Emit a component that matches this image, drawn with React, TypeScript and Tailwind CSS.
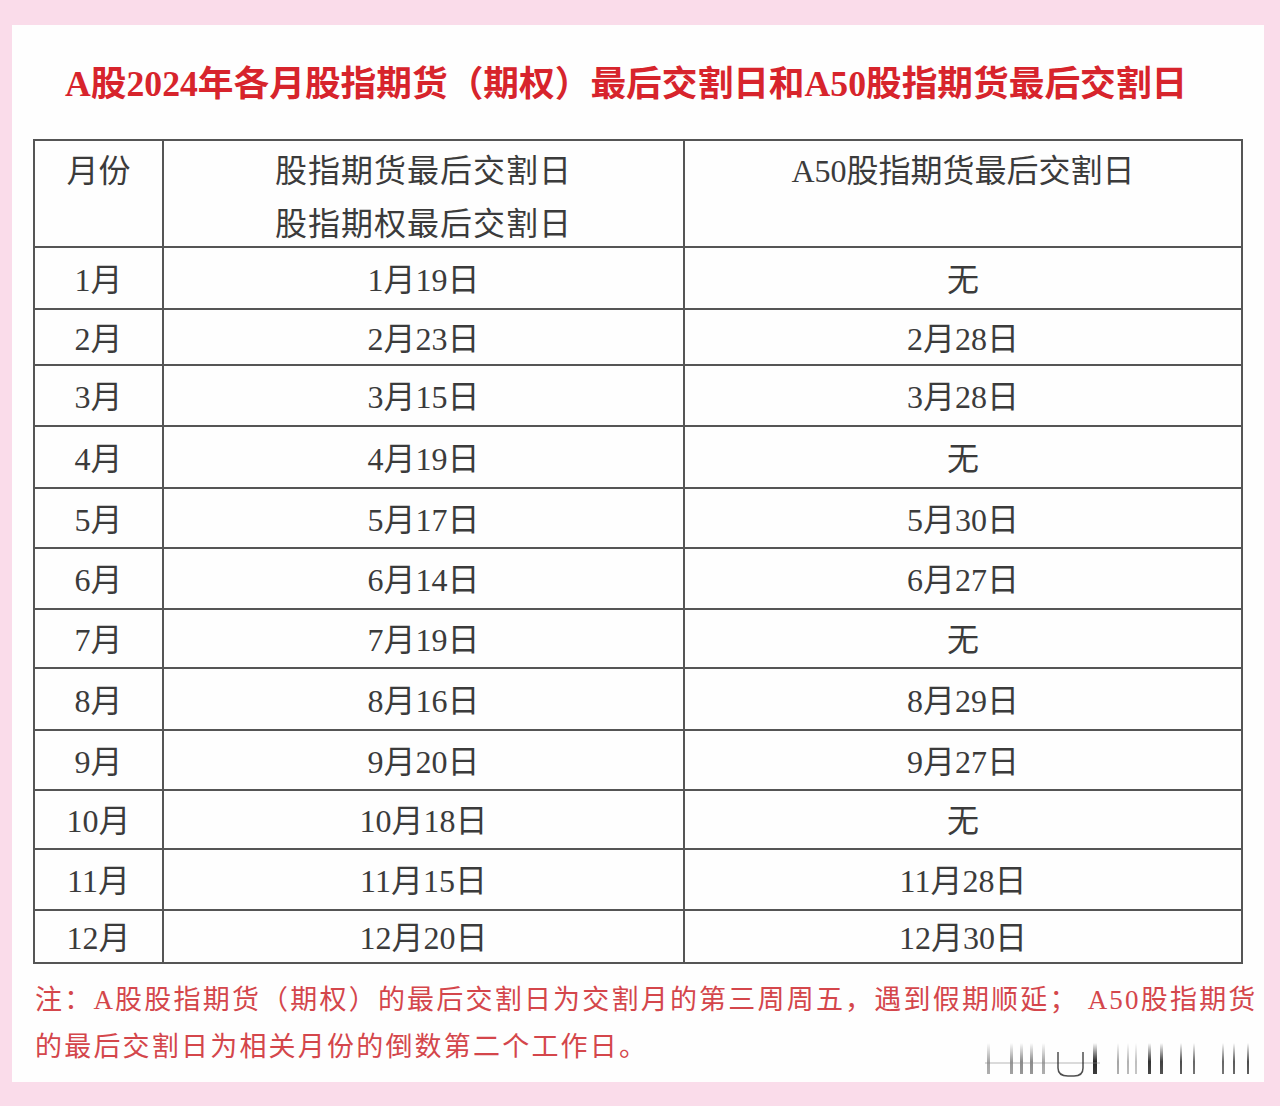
import React from "react";

const rows: [string, string, string, number][] = [
  ["1月", "1月19日", "无", 62],
  ["2月", "2月23日", "2月28日", 56],
  ["3月", "3月15日", "3月28日", 61],
  ["4月", "4月19日", "无", 62],
  ["5月", "5月17日", "5月30日", 60],
  ["6月", "6月14日", "6月27日", 61],
  ["7月", "7月19日", "无", 59],
  ["8月", "8月16日", "8月29日", 62],
  ["9月", "9月20日", "9月27日", 60],
  ["10月", "10月18日", "无", 59],
  ["11月", "11月15日", "11月28日", 61],
  ["12月", "12月20日", "12月30日", 53],
];

const font = { fontFamily: '"Liberation Serif", "Noto Sans CJK SC", serif' };

function Watermark() {
  // blurred barcode-like mark in the corner
  const bars = [
    [987, 3, 0.35], [1010, 3, 0.4], [1020, 3, 0.45], [1030, 3, 0.45], [1042, 3, 0.35],
    [1093, 4, 0.85], [1117, 2, 0.35], [1127, 2, 0.3], [1135, 2, 0.25], [1148, 3, 0.8],
    [1160, 3, 0.75], [1180, 2, 0.7], [1193, 2, 0.6], [1222, 2, 0.6], [1233, 2, 0.65], [1247, 2, 0.7],
  ];
  return (
    <svg className="absolute left-[-12px] top-[1015px]" width="1280" height="42" viewBox="0 1040 1280 42">
      <defs>
        <linearGradient id="fade" x1="0" y1="0" x2="0" y2="1">
          <stop offset="0" stopColor="#000" stopOpacity="0" />
          <stop offset="0.6" stopColor="#000" stopOpacity="1" />
          <stop offset="1" stopColor="#000" stopOpacity="0.9" />
        </linearGradient>
      </defs>
      {bars.map(([x, w, o], i) => (
        <rect key={i} x={x} y={1043} width={w} height={31} fill="url(#fade)" opacity={o} />
      ))}
      <line x1="985" y1="1063" x2="1100" y2="1063" stroke="#888" strokeWidth="1" opacity="0.6" />
      <path d="M1058 1052 V1068 Q1058 1076 1068 1076 H1074 Q1083 1076 1083 1068 V1052" fill="none" stroke="#222" strokeWidth="1.5" opacity="0.8" />
    </svg>
  );
}

export default function App() {
  return (
    <div className="min-h-[1106px] w-[1280px] bg-[#fadcea] pt-[25px] pl-[12px]" style={font}>
      <div className="relative w-[1252px] h-[1057px] bg-[#fefefe] pl-[21px] pt-[39px]">
        <h1 className="pl-[32px] text-[35.7px] leading-[40px] font-bold text-[#d7242c] whitespace-nowrap">
          A股2024年各月股指期货（期权）最后交割日和A50股指期货最后交割日
        </h1>

        <div className="mt-[35px] grid grid-cols-[129px_521px_558px] w-[1210px] border-l-2 border-t-2 border-[#555] text-[32px] text-[#3b3b3b]">
          <div className="h-[107px] border-r-2 border-b-2 border-[#555] text-center leading-[53px] pt-[4px]">月份</div>
          <div className="h-[107px] border-r-2 border-b-2 border-[#555] text-center leading-[53px] pt-[4px] tracking-[1px]">
            <div>股指期货最后交割日</div>
            <div>股指期权最后交割日</div>
          </div>
          <div className="h-[107px] border-r-2 border-b-2 border-[#555] text-center leading-[53px] pt-[4px]">A50股指期货最后交割日</div>

          {rows.map(([m, a, b, h], r) => (
            <React.Fragment key={m}>
              {[m, a, b].map((t, i) => (
                <div
                  key={i}
                  className="flex items-center justify-center border-r-2 border-b-2 border-[#555] pt-[3px]"
                  style={{ height: h }}
                >
                  {t}
                </div>
              ))}
            </React.Fragment>
          ))}
        </div>

        <div className="mt-[13px] pl-[2px] text-[27px] leading-[47px] tracking-[2.2px] text-[#d4464b] whitespace-nowrap">
          <div>注：A股股指期货（期权）的最后交割日为交割月的第三周周五，遇到假期顺延； A50股指期货</div>
          <div>的最后交割日为相关月份的倒数第二个工作日。</div>
        </div>

        <Watermark />
      </div>
    </div>
  );
}
